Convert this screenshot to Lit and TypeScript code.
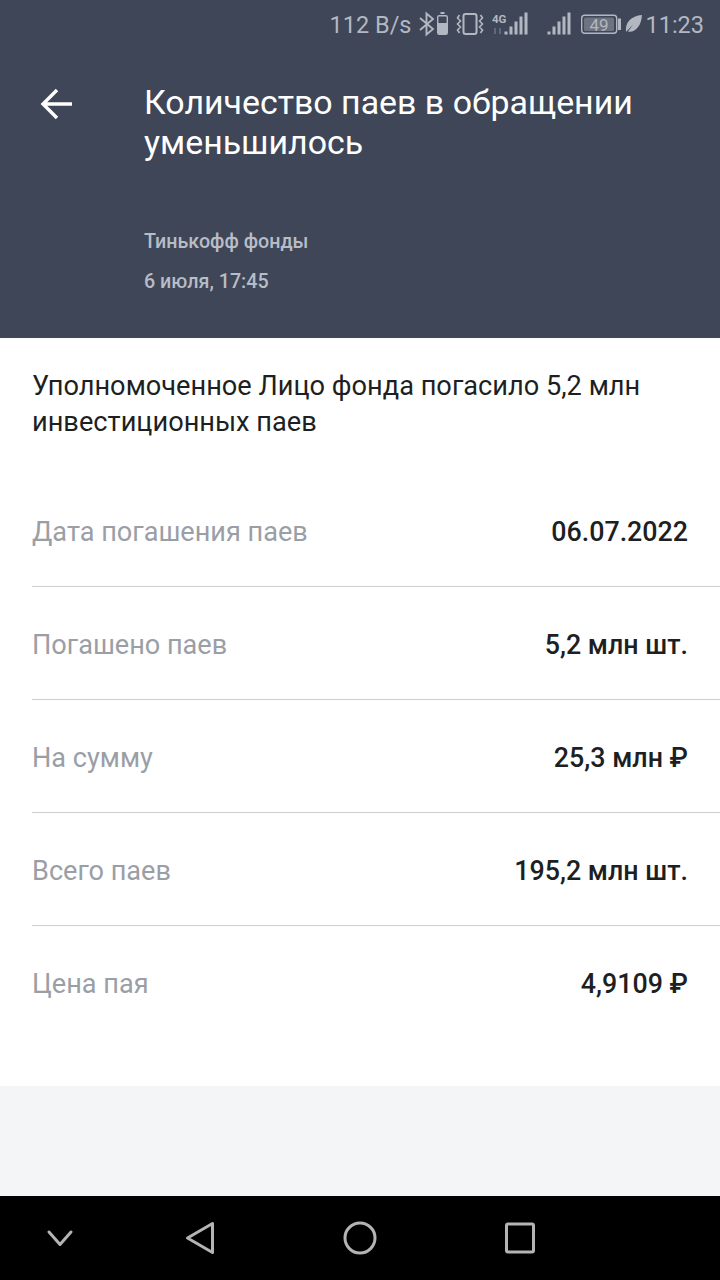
import { LitElement, html, css, svg } from "lit";
import { customElement } from "lit/decorators.js";

const rows = [
  ["Дата погашения паев", "06.07.2022"],
  ["Погашено паев", "5,2 млн шт."],
  ["На сумму", "25,3 млн ₽"],
  ["Всего паев", "195,2 млн шт."],
  ["Цена пая", "4,9109 ₽"],
];

const bars = (x: number) =>
  [3, 8, 13, 18, 22].map(
    (h, i) => svg`<rect x=${x + i * 5} y=${34.5 - h} width="3" height=${h} fill="currentColor"></rect>`
  );

@customElement("app-root")
export class AppRoot extends LitElement {
  static styles = css`
    :host {
      display: flex;
      flex-direction: column;
      width: 720px;
      height: 1280px;
      font-family: Roboto, "Noto Sans", sans-serif;
      background: #fff;
      overflow: hidden;
    }
    .header {
      height: 338px;
      box-sizing: border-box;
      background: #3e4657;
      display: flex;
      flex-direction: column;
      flex: none;
    }
    .status {
      height: 50px;
      box-sizing: border-box;
      display: flex;
      justify-content: flex-end;
      align-items: center;
      padding-right: 16px;
      color: #b3b7c1;
      font-size: 23.500px;
    }
    .status svg {
      display: block;
      margin-left: 4px;
    }
    .top {
      display: flex;
      padding-top: 33px;
    }
    .back {
      width: 144px;
      flex: none;
      padding: 5px 0 0 40px;
      box-sizing: border-box;
    }
    .back svg {
      display: block;
    }
    .title {
      margin: 0;
      font-size: 33.900px;
      font-weight: 400;
      line-height: 40px;
      color: #fff;
    }
    .meta {
      margin: 0 0 0 144px;
      font-size: 19.700px;
      font-weight: 500;
      line-height: 40px;
      color: #b8bcc6;
    }
    .source {
      margin-top: 59px;
    }
    .content {
      height: 748px;
      flex: none;
      box-sizing: border-box;
      padding-top: 30px;
    }
    .intro {
      margin: 0 32px;
      font-size: 27.200px;
      line-height: 36px;
      color: #1d1f23;
    }
    .rows {
      margin-top: 34px;
      padding-left: 32px;
    }
    .row {
      height: 113px;
      box-sizing: border-box;
      display: flex;
      justify-content: space-between;
      align-items: center;
      padding: 3px 32px 0 0;
      border-bottom: 1px solid #cdcfd2;
      font-size: 27.100px;
    }
    .row:last-child {
      border-bottom: none;
    }
    .label {
      color: #9a9ea5;
    }
    .value {
      color: #1d1f23;
      font-size: 26.800px;
      font-weight: 500;
    }
    .spacer {
      flex: 1;
      background: #f4f5f7;
    }
    .nav {
      height: 84px;
      flex: none;
      background: #000;
    }
    .nav svg {
      display: block;
      width: 720px;
      height: 84px;
    }
  `;

  private statusIcons() {
    return html`
      <svg width="230" height="50" viewBox="415 0 230 50" fill="none">
        <!-- bluetooth + small battery -->
        <path d="M420 18l13 11-6.500 5.500V13.500l6.500 5.500-13 11" stroke="currentColor" stroke-width="1.900"></path>
        <rect x="437.700" y="15.700" width="9.600" height="18.600" rx="1.500" stroke="currentColor" stroke-width="1.400"></rect>
        <rect x="440.500" y="12" width="4" height="2" fill="currentColor"></rect>
        <rect x="438" y="23" width="9" height="11" fill="currentColor"></rect>
        <!-- vibrate -->
        <rect x="463.500" y="14" width="13" height="20" rx="2" stroke="currentColor" stroke-width="2"></rect>
        <path d="M459.500 15l-2 3 3 3-3 3 3 3-3 3 2 3M480.500 15l2 3-3 3 3 3-3 3 3 3-2 3" stroke="currentColor" stroke-width="1.600"></path>
        <!-- 4G signal -->
        <text x="492" y="23" font-size="11.500" font-weight="700" fill="currentColor">4G</text>
        <path d="M495 28v6M500 28v6" stroke="currentColor" stroke-width="1.600" opacity="0.4"></path>
        <g>${bars(504.500)}</g>
        <!-- second signal -->
        <g>${bars(547.500)}</g>
        <!-- battery -->
        <rect x="581.700" y="15.200" width="35" height="18" rx="3" stroke="currentColor" stroke-width="1.400"></rect>
        <rect x="584" y="17.500" width="30" height="13.500" rx="1.500" fill="currentColor" opacity="0.4"></rect>
        <text x="599" y="30.500" font-size="17" text-anchor="middle" fill="currentColor">49</text>
        <rect x="618" y="18.500" width="3" height="11.500" fill="currentColor"></rect>
        <!-- leaf -->
        <path d="M626 32c-1-10 5-16 16-17-.5 11-7 18-14 16.500l5-7-7 7.500z" fill="currentColor"></path>
      </svg>
    `;
  }

  render() {
    return html`
      <div class="header">
        <div class="status">
          <span>112 B/s</span>
          ${this.statusIcons()}
          <span>11:23</span>
        </div>
        <div class="top">
          <div class="back">
            <svg width="33" height="32" viewBox="0 0 33 32" fill="none" stroke="#fff" stroke-width="3.400">
              <path d="M32 16H3M17 2L3 16l14 14"></path>
            </svg>
          </div>
          <h1 class="title">Количество паев в обращении<br />уменьшилось</h1>
        </div>
        <p class="meta source">Тинькофф фонды</p>
        <p class="meta">6 июля, 17:45</p>
      </div>
      <div class="content">
        <p class="intro">Уполномоченное Лицо фонда погасило 5,2 млн<br />инвестиционных паев</p>
        <div class="rows">
          ${rows.map(
            ([label, value]) => html`
              <div class="row">
                <span class="label">${label}</span>
                <span class="value">${value}</span>
              </div>
            `
          )}
        </div>
      </div>
      <div class="spacer"></div>
      <div class="nav">
        <svg viewBox="0 0 720 84" fill="none" stroke="#b4b4b4" stroke-width="3" stroke-linejoin="round" stroke-linecap="round">
          <path d="M49 36l11 12.500 11-12.500"></path>
          <path d="M212.500 27.500v29l-25-14.500z"></path>
          <circle cx="360" cy="42" r="15"></circle>
          <rect x="506.500" y="28" width="27" height="28" rx="1.500"></rect>
        </svg>
      </div>
    `;
  }
}
